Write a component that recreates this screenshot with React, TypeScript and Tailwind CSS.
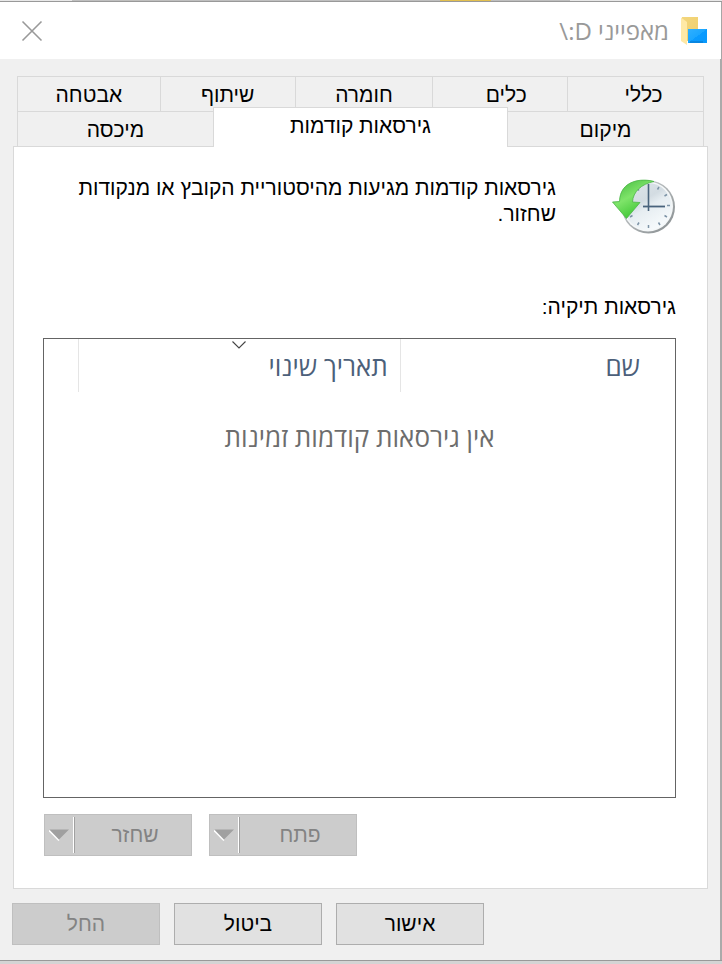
import React, { ReactNode } from "react";

interface ITab {
  label: string;
  className: string;
  labelClassName?: string;
}

const upperTabs: ITab[] = [
  {
    label: "כללי",
    className: "flex-[136] border-x",
    labelClassName: "pl-4",
  },
  { label: "כלים", className: "flex-[135] border-l", labelClassName: "pl-3" },
  { label: "חומרה", className: "flex-[138] border-l" },
  { label: "שיתוף", className: "flex-[135] border-l" },
  { label: "אבטחה", className: "flex-[143] border-l" },
];

const FolderIcon = () => (
  <svg width="26" height="28" viewBox="0 0 26 28" aria-hidden="true">
    <defs>
      <linearGradient id="folderBack" x1="0" y1="0" x2="1" y2="1">
        <stop offset="0" stopColor="#f3d67d" />
        <stop offset="1" stopColor="#f0cf6c" />
      </linearGradient>
      <linearGradient id="screen" x1="0" y1="0" x2="1" y2="1">
        <stop offset="0" stopColor="#2fb0ff" />
        <stop offset="0.5" stopColor="#1ba6ff" />
        <stop offset="0.5" stopColor="#0a9bff" />
        <stop offset="1" stopColor="#0898fb" />
      </linearGradient>
    </defs>
    <path d="M1 0H17V24H6L1 22Z" fill="url(#folderBack)" />
    <path d="M0 0.5L6 5V28L0 24Z" fill="#ffe9a6" />
    <rect x="7" y="12" width="19" height="14" fill="url(#screen)" />
    <path d="M9 25H22" stroke="#0873c4" strokeWidth="1" />
  </svg>
);

const HistoryIcon = () => (
  <svg width="64" height="56" viewBox="0 0 64 56" aria-hidden="true">
    <defs>
      <linearGradient id="face" x1="0" y1="0" x2="0.6" y2="1">
        <stop offset="0" stopColor="#dfe6eb" />
        <stop offset="0.45" stopColor="#d3dce2" />
        <stop offset="0.6" stopColor="#e6edf1" />
        <stop offset="1" stopColor="#f6fafc" />
      </linearGradient>
      <linearGradient id="rim" x1="0" y1="0" x2="1" y2="1">
        <stop offset="0" stopColor="#d5d9db" />
        <stop offset="1" stopColor="#858b8d" />
      </linearGradient>
      <linearGradient id="arrow" x1="0" y1="0" x2="0.6" y2="1">
        <stop offset="0" stopColor="#3db53a" />
        <stop offset="0.5" stopColor="#7fe46a" />
        <stop offset="1" stopColor="#35c22d" />
      </linearGradient>
    </defs>
    <circle cx="36.5" cy="28" r="26.5" fill="url(#rim)" />
    <circle cx="36" cy="27.5" r="25" fill="#f4f7f8" />
    <circle cx="36" cy="27.5" r="23.5" fill="url(#face)" />
    <path
      d="M47 8L45.500 10.500M55 15.500L52.500 17M58 26.500H55M55 38L52.500 36.500M48 46L46.500 43.500M36.500 49V46M25.500 46L27 43.500M18 38L20.500 36.500M25 9L27 11.500"
      stroke="#7d93a6"
      strokeWidth="1.5"
    />
    <path d="M36.500 5V32" stroke="#49637c" strokeWidth="1.6" />
    <path d="M31 27.500H53" stroke="#49637c" strokeWidth="1.8" />
    <path
      d="M42 2.500C30 -1 8 1 7.500 22.500L0.500 23L14.500 39.500L28 23.500L20.500 23C21 13 29 5 42 2.500Z"
      fill="url(#arrow)"
      stroke="#4bb548"
      strokeWidth="0.8"
    />
  </svg>
);

const Tab = ({ label, className, labelClassName = "" }: ITab) => (
  <button
    role="tab"
    aria-selected="false"
    className={`h-9 border-t border-[#d9d9d9] text-black ${className}`}>
    <span className={labelClassName}>{label}</span>
  </button>
);

const SplitButton = ({ label }: { label: string }) => (
  <div className="flex h-[42px] w-[148px] items-center border border-[#bfbfbf] bg-[#cccccc]">
    <button disabled className="h-full flex-1 pl-1 text-[#838383]">
      {label}
    </button>
    <span className="h-9 w-[2px] border-l border-r border-l-[#a0a0a0] border-r-white [direction:ltr] rotate-180" />
    <button
      disabled
      aria-label={label}
      className="flex h-full w-7 items-center justify-center">
      <svg width="20" height="12" viewBox="0 0 20 12">
        <path d="M0 1.500L10 11.500" stroke="#fff" strokeWidth="1.5" />
        <path d="M0.500 0.500H20L10 10.500Z" fill="#a0a0a0" />
      </svg>
    </button>
  </div>
);

const DialogButton = ({
  children,
  disabled,
}: {
  children: ReactNode;
  disabled?: boolean;
}) => (
  <button
    disabled={disabled}
    className="h-[42px] w-[148px] border border-[#adadad] bg-[#e1e1e1] text-black disabled:border-[#bfbfbf] disabled:bg-[#cccccc] disabled:text-[#838383]">
    {children}
  </button>
);

const App = () => {
  return (
    <div
      dir="rtl"
      className="flex min-h-screen flex-col bg-[#dcdcdc] font-['Liberation_Sans',sans-serif] text-[21px] leading-[26px]">
      <div dir="ltr" className="flex h-px w-full bg-[#e8e8e8]">
        <span className="w-[10%] bg-[#e8e8e8]" />
        <span className="w-[51%] bg-[#bfbfbf]" />
        <span className="w-[7%] bg-[#e3c04f]" />
        <span className="w-[11%] bg-[#bfbfbf]" />
      </div>

      <div className="flex flex-1 flex-col border-t border-b border-[#999999] bg-[#f0f0f0]">
        <header className="flex h-[57px] items-center justify-between border-r border-[#a6a6a6] bg-white pr-[14px] pl-[21px]">
          <div className="flex items-center gap-3">
            <FolderIcon />
            <h1 className="font-['Open_Sans',sans-serif] text-2xl text-[#999999]">
              מאפייני <bdo dir="ltr">\:D</bdo>
            </h1>
          </div>
          <button aria-label="סגור">
            <svg width="22" height="22" viewBox="0 0 22 22">
              <path
                d="M1.500 1.500L20.500 20.500M20.500 1.500L1.500 20.500"
                stroke="#999999"
                strokeWidth="1.6"
              />
            </svg>
          </button>
        </header>

        <main className="flex flex-1 flex-col border-r-2 border-[#aaaaaa] pt-[17px] pr-3 pb-[15px] pl-3">
          <div role="tablist" className="pr-1 pl-[5px]">
            <div className="flex">
              {upperTabs.map((tab) => (
                <Tab key={tab.label} {...tab} />
              ))}
            </div>
            <div className="-mt-px flex items-start">
              <Tab label="מיקום" className="flex-[196] border-r" />
              <button
                role="tab"
                aria-selected="true"
                className="relative -mt-1 -mb-px h-10 flex-[295] border-x border-t border-[#d9d9d9] bg-white pb-1 text-black">
                גירסאות קודמות
              </button>
              <Tab label="מיכסה" className="flex-[196] border-l" />
            </div>
          </div>

          <section
            role="tabpanel"
            className="-mt-px ml-px flex flex-1 flex-col border border-[#d9d9d9] bg-white pt-7 pr-[31px] pb-8 pl-[29px] text-black">
            <div className="flex items-start gap-14">
              <div className="pt-1">
                <HistoryIcon />
              </div>
              <p className="flex-1">
                גירסאות קודמות מגיעות מהיסטוריית הקובץ או מנקודות
                <br />
                שחזור.
              </p>
            </div>

            <h2 id="versions" className="mt-[59px]">
              גירסאות תיקיה:
            </h2>

            <div className="mt-[18px] flex-1 border border-[#646464]">
              <table
                aria-labelledby="versions"
                className="w-full table-fixed border-separate border-spacing-0 font-['Open_Sans',sans-serif] text-[26px]">
                <thead>
                  <tr className="h-[53px] text-[#4c607a]">
                    <th className="border-l border-[#e5e5e5] pr-[35px] text-right font-normal">
                      שם
                    </th>
                    <th
                      aria-sort="descending"
                      className="relative w-[51%] border-l border-[#e5e5e5] pr-3 text-right font-normal">
                      <svg
                        className="absolute top-[2px] left-1/2 -translate-x-1/2"
                        width="14"
                        height="8"
                        viewBox="0 0 14 8">
                        <path
                          d="M0.500 0.500L7 7L13.500 0.500"
                          fill="none"
                          stroke="#444444"
                          strokeWidth="1.1"
                        />
                      </svg>
                      תאריך שינוי
                    </th>
                    <td className="w-[34px]" />
                  </tr>
                </thead>
                <tbody>
                  <tr>
                    <td
                      colSpan={3}
                      className="pt-8 text-center text-[#6d6d6d]">
                      אין גירסאות קודמות זמינות
                    </td>
                  </tr>
                </tbody>
              </table>
            </div>

            <div className="mt-4 flex justify-end gap-[17px] pl-px">
              <SplitButton label="פתח" />
              <SplitButton label="שחזר" />
            </div>
          </section>

          <footer className="mt-[14px] flex justify-end gap-[14px]">
            <DialogButton>אישור</DialogButton>
            <DialogButton>ביטול</DialogButton>
            <DialogButton disabled>החל</DialogButton>
          </footer>
        </main>
      </div>
      <div className="h-[3px] bg-[#d4d4d4]" />
    </div>
  );
};

export default App;
